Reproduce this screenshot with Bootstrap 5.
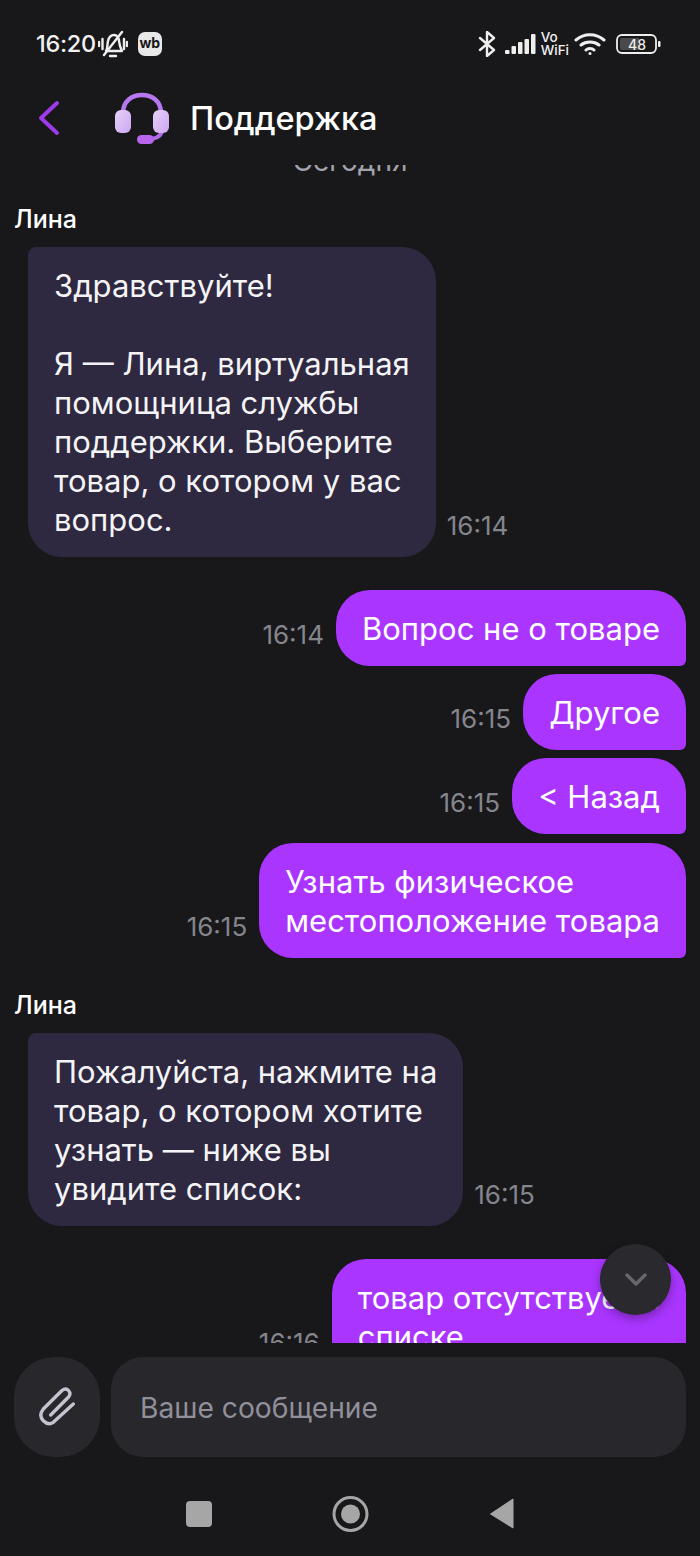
<!DOCTYPE html>
<html lang="ru">
<head>
    <meta charset="UTF-8">
    <meta name="viewport" content="width=device-width, initial-scale=1.0">
    <title>Поддержка</title>
    <link href="https://cdn.jsdelivr.net/npm/bootstrap@5.3.0/dist/css/bootstrap.min.css" rel="stylesheet">
    <style>
        html, body { height: 100%; }
        body { background-color: #18181b; color: #fff; font-family: Inter, "Noto Sans", sans-serif; overflow: hidden; }
        .app-screen { height: 1556px; }
        .status-bar { height: 88px; padding: 0 39px 0 36px; }
        .status-time { font-size: 23.5px; font-weight: 500; color: #f1f1f1; letter-spacing: -0.3px; }
        .bell-icon { margin-left: 2px; }
        .wb-badge { width: 24px; height: 24px; margin-left: 10px; border-radius: 7px; background: #e8e8e8; color: #18181b; font-size: 14px; font-weight: 700; line-height: 22px; text-align: center; }
        .sig-icon { margin-left: 9px; }
        .vowifi { margin-left: 5px; font-size: 13.5px; line-height: 13px; font-weight: 500; color: #f1f1f1; }
        .wifi-icon { margin-left: 5px; }
        .batt-icon { margin-left: 10px; }
        .chat-header { height: 60px; padding-left: 36px; margin-bottom: 17px; }
        .head-icon { margin-left: 52px; }
        .chat-title { font-size: 32.5px; font-weight: 500; color: #fff; margin-left: 20px; margin-top: 2px; }
        .chat-scroll { height: 1178px; overflow: hidden; padding: 0 14px; flex-shrink: 0; }
        .day-label { margin-top: -21px; height: 34px; text-align: center; font-size: 28px; line-height: 34px; color: #a3a3ab; }
        .author-name { font-size: 25px; font-weight: 500; line-height: 30px; margin-top: 26px; margin-bottom: 13px; }
        .author-next { margin-top: 32px; }
        .msg-row { display: flex; align-items: flex-end; gap: 12px; margin-bottom: 8px; }
        .msg-gap { margin-bottom: 9px; }
        .msg-bubble { font-size: 31px; line-height: 39px; padding: 18.5px 26px; border-radius: 34px; white-space: nowrap; }
        .msg-in { margin-left: 14px; margin-bottom: 33px; gap: 11px; }
        .msg-in .msg-bubble { background: #2e2840; border-top-left-radius: 8px; color: #f4f4f6; }
        .msg-out { justify-content: flex-end; }
        .msg-out .msg-bubble { background: #a935ff; border-bottom-right-radius: 6px; }
        .msg-time { font-size: 26px; line-height: 30px; color: #85858c; padding-bottom: 16px; white-space: nowrap; }
        .scroll-down { right: 29px; top: 1244px; width: 71px; height: 71px; background: #29292e; box-shadow: 0 4px 10px rgba(0,0,0,.3); }
        .composer { padding: 14px 14px 0; gap: 11px; }
        .attach-btn { width: 86px; height: 100px; border-radius: 40px; background: #27272c; }
        .msg-input { height: 100px; border-radius: 32px; background: #27272c; padding: 2px 0 0 29px; font-size: 28.2px; color: #918f9a; }
        .nav-bar { height: 99px; padding-top: 15px; }
    </style>
</head>
<body>
<div class="app-screen position-relative d-flex flex-column">

    <!-- Status bar -->
    <div class="status-bar d-flex align-items-center justify-content-between">
        <div class="d-flex align-items-center">
            <span class="status-time">16:20</span>
            <svg class="bell-icon" width="30" height="30" viewBox="0 0 30 30" fill="none" stroke="#eee" stroke-width="2.4" stroke-linecap="round" stroke-linejoin="round">
                <path d="M8 22c2-3 1-6 2-10s3-6 6-6 5 3 5 6l1 5 2 5z"/>
                <path d="M12 27h6M6 26L24 3M1 13v4M4.500 10v10M26 10v10M29 13v4"/>
            </svg>
            <span class="wb-badge">wb</span>
        </div>
        <div class="d-flex align-items-center">
            <svg width="18" height="26" viewBox="0 0 18 26" fill="none" stroke="#eee" stroke-width="2.4" stroke-linecap="round" stroke-linejoin="round"><path d="M2 7l14 12-7 6V1l7 6L2 19"/></svg>
            <svg class="sig-icon" width="31" height="20" viewBox="0 0 31 20" fill="#eee"><rect x="0" y="16" width="4.500" height="4" rx="1"/><rect x="6.500" y="12" width="4.500" height="8" rx="1"/><rect x="13" y="8" width="4.500" height="12" rx="1"/><rect x="19.500" y="5" width="4.500" height="15" rx="1"/><rect x="26" y="0" width="4.500" height="20" rx="1"/></svg>
            <div class="vowifi">Vo<br>WiFi</div>
            <svg class="wifi-icon" width="32" height="24" viewBox="0 0 32 24" fill="none" stroke="#eee" stroke-width="3" stroke-linecap="round"><path d="M2 8c8-7 20-7 28 0M7 13c5-4 13-4 18 0M12 18c2-2 6-2 8 0"/><circle cx="16" cy="21.500" r="1.500" fill="#eee" stroke="none"/></svg>
            <svg class="batt-icon" width="45" height="22" viewBox="0 0 45 22"><rect x="1" y="2" width="39" height="18" rx="5" fill="none" stroke="#eee" stroke-width="1.800"/><path d="M4 7a2 2 0 0 1 2-2h17v12H6a2 2 0 0 1-2-2z" fill="#4a4a4a"/><rect x="42" y="8" width="2.500" height="6" rx="1" fill="#eee"/><text x="21" y="16.500" text-anchor="middle" font-family="Inter, sans-serif" font-size="14" font-weight="500" fill="#eee">48</text></svg>
        </div>
    </div>

    <!-- Header -->
    <div class="chat-header d-flex align-items-center">
        <svg width="26" height="36" viewBox="0 0 26 36" fill="none" stroke="#9d3be8" stroke-width="4" stroke-linecap="round" stroke-linejoin="round"><path d="M21 3L5 18l16 15"/></svg>
        <svg class="head-icon" width="56" height="54" viewBox="0 0 56 54" fill="none">
            <defs>
                <linearGradient id="cupFill" x1="0" y1="0" x2="1" y2="1"><stop offset="0" stop-color="#e6d2f9"/><stop offset="1" stop-color="#cda6f2"/></linearGradient>
            </defs>
            <path d="M9 22C9 10 18 4 28 4s19 6 19 18" stroke="#b678f0" stroke-width="4.500"/>
            <path d="M48 38c0 6-4 9-10 10" stroke="#b06ae8" stroke-width="4"/>
            <rect x="1" y="19" width="16" height="23" rx="6" fill="url(#cupFill)"/>
            <rect x="39" y="19" width="16" height="23" rx="6" fill="url(#cupFill)"/>
            <rect x="23" y="44" width="17" height="9" rx="4.500" fill="#b866ee"/>
        </svg>
        <div class="chat-title">Поддержка</div>
    </div>

    <!-- Messages -->
    <div class="chat-scroll">
        <div class="day-label">Сегодня</div>
        <div class="author-name">Лина</div>
        <div class="msg-row msg-in">
            <div class="msg-bubble">Здравствуйте!<br><br>Я — Лина, виртуальная<br>помощница службы<br>поддержки. Выберите<br>товар, о котором у вас<br>вопрос.</div>
            <span class="msg-time">16:14</span>
        </div>
        <div class="msg-row msg-out">
            <span class="msg-time">16:14</span>
            <div class="msg-bubble">Вопрос не о товаре</div>
        </div>
        <div class="msg-row msg-out">
            <span class="msg-time">16:15</span>
            <div class="msg-bubble">Другое</div>
        </div>
        <div class="msg-row msg-out msg-gap">
            <span class="msg-time">16:15</span>
            <div class="msg-bubble">&lt; Назад</div>
        </div>
        <div class="msg-row msg-out">
            <span class="msg-time">16:15</span>
            <div class="msg-bubble">Узнать физическое<br>местоположение товара</div>
        </div>
        <div class="author-name author-next">Лина</div>
        <div class="msg-row msg-in">
            <div class="msg-bubble">Пожалуйста, нажмите на<br>товар, о котором хотите<br>узнать — ниже вы<br>увидите список:</div>
            <span class="msg-time">16:15</span>
        </div>
        <div class="msg-row msg-out">
            <span class="msg-time">16:16</span>
            <div class="msg-bubble">товар отсутствует в<br>списке</div>
        </div>
    </div>

    <!-- Scroll down button -->
    <div class="scroll-down position-absolute rounded-circle d-flex align-items-center justify-content-center">
        <svg width="24" height="14" viewBox="0 0 24 14" fill="none" stroke="#66666d" stroke-width="3.500" stroke-linecap="round" stroke-linejoin="round"><path d="M3 2l9 9 9-9"/></svg>
    </div>

    <!-- Composer -->
    <div class="composer d-flex">
        <div class="attach-btn d-flex align-items-center justify-content-center flex-shrink-0">
            <svg width="40" height="44" viewBox="0 0 40 44" fill="none" stroke="#c4c3cf" stroke-width="3.400" stroke-linecap="round" stroke-linejoin="round"><path d="M36.300 19L16.300 37.300Q11.300 40.700 6.300 35.700Q1.300 30.700 6.300 24L24.700 5.700Q28.700 2.300 31.500 5.500Q34.500 9 31.300 12.300L13.700 30"/></svg>
        </div>
        <div class="msg-input flex-grow-1 d-flex align-items-center">Ваше сообщение</div>
    </div>

    <!-- Android nav -->
    <div class="nav-bar d-flex align-items-center justify-content-center">
        <svg width="328" height="44" viewBox="0 0 328 44">
            <rect x="0" y="9" width="26" height="26" rx="4" fill="#a6a6a6"/>
            <circle cx="164.500" cy="22" r="16.500" fill="none" stroke="#a6a6a6" stroke-width="3"/>
            <circle cx="164.500" cy="22" r="9.500" fill="#a6a6a6"/>
            <path d="M304.500 22L327 7v29z" fill="#a6a6a6" stroke="#a6a6a6" stroke-width="1" stroke-linejoin="round"/>
        </svg>
    </div>
</div>
<script src="https://cdn.jsdelivr.net/npm/bootstrap@5.3.0/dist/js/bootstrap.bundle.min.js"></script>
</body>
</html>
